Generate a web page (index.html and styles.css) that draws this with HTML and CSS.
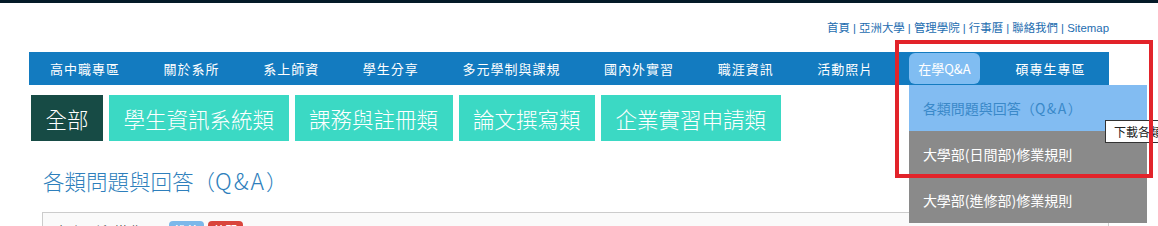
FILE: index.html
```html
<!DOCTYPE html>
<html lang="zh-Hant">
<head>
<meta charset="utf-8">
<title>在學Q&amp;A</title>
<link rel="stylesheet" href="styles.css">
</head>
<body>
<div class="topbar"></div>
<div class="wrap">
  <div class="toplinks">
    <a href="#">首頁</a> | <a href="#">亞洲大學</a> | <a href="#">管理學院</a> | <a href="#">行事曆</a> | <a href="#">聯絡我們</a> | <a href="#">Sitemap</a>
  </div>
  <nav class="nav">
    <ul class="nav-list">
      <li><a href="#">高中職專區</a></li>
      <li><a href="#">關於系所</a></li>
      <li><a href="#">系上師資</a></li>
      <li><a href="#">學生分享</a></li>
      <li><a href="#">多元學制與課規</a></li>
      <li><a href="#">國內外實習</a></li>
      <li><a href="#">職涯資訊</a></li>
      <li><a href="#">活動照片</a></li>
      <li class="has-drop"><a href="#" class="active">在學Q&amp;A</a>
        <ul class="drop">
          <li class="drop-item current">各類問題與回答（<span class="qa">Q&amp;A</span>）</li>
          <li class="drop-item">大學部(日間部)修業規則</li>
          <li class="drop-item">大學部(進修部)修業規則</li>
        </ul>
      </li>
      <li><a href="#">碩專生專區</a></li>
    </ul>
  </nav>
  <div class="tabs">
    <span class="tab tab-dark">全部</span>
    <span class="tab">學生資訊系統類</span>
    <span class="tab">課務與註冊類</span>
    <span class="tab">論文撰寫類</span>
    <span class="tab">企業實習申請類</span>
  </div>
  <h1 class="title">各類問題與回答（<span class="qa">Q&amp;A</span>）</h1>
  <div class="panel">
    <span class="q">如何列印繳費單?</span>
    <span class="badge badge-blue">推薦</span>
    <span class="badge badge-red">熱門</span>
  </div>
</div>
<div class="tooltip">下載各類問題與回答</div>
<div class="redbox"></div>
</body>
</html>
```
FILE: styles.css
```css
html, body {
  margin: 0;
  padding: 0;
  background: #ffffff;
  font-family: "Noto Sans CJK TC", "Liberation Sans", sans-serif;
  overflow: hidden;
}
.topbar {
  height: 3px;
  background: #031a28;
}
.wrap {
  margin-left: 29px;
  width: 1080px;
}
.toplinks {
  height: 49px;
  box-sizing: border-box;
  padding-top: 17px;
  text-align: right;
  font-family: "Liberation Sans", "Noto Sans CJK TC", sans-serif;
  font-size: 11.4px;
  line-height: 16px;
  color: #1d6db0;
}
.toplinks a {
  color: #1d6db0;
  text-decoration: none;
}
.nav {
  height: 33px;
  background: #137bc0;
}
.nav-list {
  list-style: none;
  margin: 0;
  padding: 0 0 0 13px;
  display: flex;
  gap: 27.6px;
  height: 33px;
}
.nav-list > li {
  position: relative;
  display: flex;
  align-items: stretch;
}
.nav-list > li > a {
  display: flex;
  align-items: center;
  padding: 0 8px;
  margin: 1px 0 1px;
  color: #ffffff;
  text-decoration: none;
  font-size: 13px;
  letter-spacing: 1px;
  border-radius: 6px;
}
.nav-list > li > a.active {
  background: #80bdf2;
  letter-spacing: 0;
  padding: 0 8px;
  min-width: 55px;
  justify-content: center;
}
.drop {
  position: absolute;
  left: 0;
  top: 33px;
  width: 238px;
  margin: 0;
  padding: 0;
  list-style: none;
  z-index: 5;
}
.drop-item {
  height: 46px;
  display: flex;
  align-items: center;
  padding-left: 14px;
  background: #8a8a8a;
  color: #ffffff;
  font-size: 14px;
}
.drop-item.current {
  background: #82bcf2;
  color: #3a89c9;
}
.drop-item .qa {
  letter-spacing: 1.5px;
}
.tabs {
  display: flex;
  gap: 6px;
  margin: 10px 0 0 2px;
}
.tab {
  height: 46px;
  display: flex;
  align-items: center;
  padding: 0 14.5px;
  background: #3bd9c4;
  color: #ffffff;
  font-size: 21.5px;
  font-weight: 300;
}
.tab-dark {
  background: #174b45;
}
.title {
  margin: 24px 0 0 14px;
  font-size: 21.5px;
  line-height: 30px;
  font-weight: 300;
  color: #2e7fbc;
}
.title .qa {
  letter-spacing: 2px;
  font-size: 23px;
}
.panel {
  margin: 16px 0 0 13px;
  height: 60px;
  border: 1px solid #cccccc;
  background: #fafafa;
  box-sizing: border-box;
  padding: 7px 0 0 15px;
  display: flex;
  align-items: flex-start;
  gap: 4px;
}
.q {
  font-size: 14px;
  line-height: 20px;
  margin-top: 1px;
  color: #333333;
}
.badge {
  margin-top: 1px;
  height: 19px;
  padding: 0 5.5px;
  border-radius: 4px;
  font-size: 12px;
  line-height: 19px;
  color: #ffffff;
  font-weight: bold;
}
.badge-blue {
  background: #7cb8ea;
  margin-left: 2px;
}
.badge-red {
  background: #d9453c;
}
.tooltip {
  position: absolute;
  left: 1105px;
  top: 120px;
  height: 23px;
  box-sizing: border-box;
  padding: 0 8px;
  border: 1px solid #333333;
  background: #ffffff;
  color: #222222;
  font-size: 12px;
  line-height: 21px;
  white-space: nowrap;
  z-index: 8;
}
.redbox {
  position: absolute;
  left: 895px;
  top: 40px;
  width: 258px;
  height: 138px;
  box-sizing: border-box;
  border: 4px solid #e2232a;
  pointer-events: none;
  z-index: 10;
}
```
